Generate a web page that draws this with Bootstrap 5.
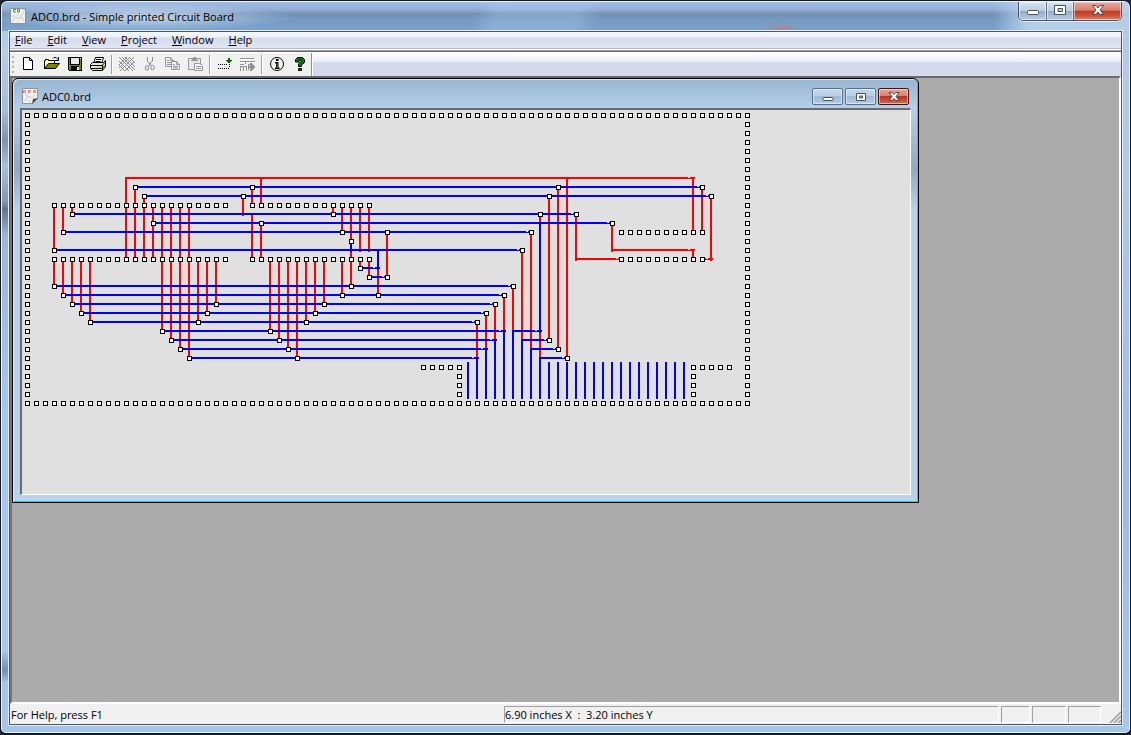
<!DOCTYPE html>
<html lang="en">
<head>
<meta charset="utf-8">
<meta name="viewport" content="width=device-width, initial-scale=1">
<title>ADC0.brd - Simple printed Circuit Board</title>
<link href="https://cdn.jsdelivr.net/npm/bootstrap@5.3.0/dist/css/bootstrap.min.css" rel="stylesheet">
<style>
  body { font-family: "Open Sans", "Noto Sans", sans-serif; font-size: 11px; line-height: 16px; color: #000; background: #1c2733; }
  h1, h2 { font-size: 11px; line-height: 16px; font-weight: 400; }
  .app-window {
    border: 1px solid #14181f; border-bottom-width: 2px; border-radius: 7px 7px 6px 6px;
    padding: 0 8px 8px;
    box-shadow: inset 0 0 0 1px #e8f2fc;
    background:
      linear-gradient(180deg, #b3cae6 0, #b3cae6 120px, #a9c6e8 260px, #9bbde2 480px, #a5c8ee 100%) right / 12px 100% no-repeat,
      linear-gradient(180deg, #a9c6ea 0, #b5cde6 50px, #a6bdd6 110px, #7d92aa 140px, #a9c2dc 165px, #8598ad 200px, #5e7490 208px, #9ab8d8 235px, #a6c8ec 420px, #a6c8ec 650px, #6f90b3 669px, #a5c5ea 682px, #a5c5ea 100%);
  }
  .glass-title {
    height: 29px; margin: 1px -7px 0; padding-left: 8px;
    background:
      radial-gradient(ellipse 150px 14px at 140px 15px, rgba(222,236,250,.75), rgba(222,236,250,0)),
      linear-gradient(90deg, rgba(190,215,240,0) 0 88%, rgba(190,213,238,.85) 91%),
      radial-gradient(ellipse 20px 6px at 780px 27px, rgba(190,120,120,.7), rgba(190,120,120,0)),
      linear-gradient(110deg, transparent 42%, rgba(190,215,250,.25) 44% 51%, transparent 53%),
      linear-gradient(180deg, #a0bce6 0, #93afd8 7px, #7392b4 12px, #769bc2 18px, #7ca3cd 100%);
    border-radius: 5px 5px 0 0;
  }
  .win-btns { height: 19px; border: 1px solid #46566b; border-top: 0; border-radius: 0 0 5px 5px; overflow: hidden; margin-right: 7px; box-shadow: 0 1px 0 #dcebfa; }
  .win-btn { border: 0; padding: 0; line-height: 1; background: linear-gradient(#d5e2f0 0, #bccde0 48%, #94abc4 50%, #b6cde4 100%); border-right: 1px solid #5b6d83; box-shadow: inset 0 0 0 1px rgba(255,255,255,.5); }
  .win-btn.w-close { background: linear-gradient(#e7a498 0, #d98070 46%, #bb3a22 50%, #cb5a40 80%, #e08c72 100%); border-right: 0; }
  .win-btns svg { display: block; margin: 0 auto 2px; }
  .win-min { width: 28px; } .win-max { width: 27px; } .w-close { width: 47px; }
  .child-btns { gap: 2px; margin-right: 2px; }
  .child-btns .win-btn { width: 31px; height: 17px; border: 1px solid #57708e; border-radius: 2px; background: linear-gradient(#c5d8ec 0, #b5cce4 48%, #9fbad6 50%, #b2cce8 100%); }
  .child-btns .w-close { border-color: #4d0f10; background: linear-gradient(#e7a498 0, #d98070 46%, #b83320 50%, #d46a50 100%); }
  .client { border: 1px solid #46566b; outline: 1px solid #e3eefa; background: #f0f0f0; }
  .menu-strip { height: 17px; background: linear-gradient(#f7f9fc 0, #eceff7 5px, #d5dbed 6px, #e1e6f5 16px, #b1bacb 16px, #b1bacb 17px); }
  .menu-strip a { color: #000; text-decoration: none; padding: 0 8px 0 7px; line-height: 16px; }
  .menu-strip li:first-child a { padding-left: 5px; }
  .rebar-edge { height: 4px; border-top: 1px solid #fff; background: linear-gradient(#a0a0a0 1px, #696969 1px 2px, #fff 2px); }
  .tool-strip { height: 23px; background: linear-gradient(#fff 0, #e8ebf7 9px, #d4daec 9px, #d4daec 100%); }
  .tool-band { background: #f0f0f0; border-right: 1px solid #909090; box-shadow: 1px 0 0 #fff; }
  .tool-grip { width: 7px; background: repeating-linear-gradient(#f0f0f0 0 3px, #b4b4b4 3px 5px) 2px 0/2px 100% no-repeat; }
  .tool-btn { width: 23px; height: 23px; padding: 0 0 2px; border: 0; background: none; }
  .tool-btn svg { display: block; margin: 1px auto 0; }
  .tool-sep { width: 6px; }
  .tool-sep::before { content: ""; display: block; width: 2px; height: 19px; margin: 2px; border-left: 1px solid #a0a0a0; border-right: 1px solid #fff; }
  .mdi { background: #ababab; border: solid; border-width: 2px 2px 2px 2px; border-color: #696969 #fff #fff #777; }
  .child-window { border: 1px solid #000; border-radius: 6px 6px 0 0; padding: 0 7px 7px; background: linear-gradient(#97b4d1 0, #b7d0e9 30px, #8fa9c4 90px, #b9d1ea 130px); box-shadow: inset 1px 1px 0 #dceaf8, inset -1px -1px 0 #35c6dc; }
  .child-title { height: 29px; padding: 6px 0 0 2px; }
  .board-frame { border: solid; border-width: 2px 1px 1px 2px; border-color: #6b6b6b #fff #fff #6b6b6b; background: #e0e0e0; }
  .status-strip { height: 20px; padding: 2px 0 1px 1px; }
  .pane { border: 1px solid; border-color: #a0a0a0 #fff #fff #a0a0a0; margin-right: 2px; line-height: 15px; }
  .pane-pos { width: 495px; } .pane-a { width: 29px; } .pane-b { width: 34px; } .pane-c { width: 33px; }
  .grip-corner { width: 18px; }
</style>
</head>
<body class="m-0">
<div class="app-window vh-100 d-flex flex-column overflow-hidden">
  <header class="glass-title d-flex align-items-start flex-shrink-0">
    <svg class="mt-1 me-1" width="17" height="20" viewBox="0 1 17 20" aria-hidden="true">
      <path fill="#f2f2ec" stroke="#8d9498" d="M.5 3.500h15v15H.5z"/>
      <path stroke="#c4c8c6" fill="none" d="M2 17l4-5 3 2 5-7M8 8v3M12 5h3M11 12l3 4M2 11h3"/>
      <path stroke="#3c9c50" fill="none" d="M6 4.500H3.500V7H6M7.500 4.500v2.500h2v-2.500z"/>
    </svg>
    <h1 class="m-0 flex-grow-1 align-self-center">ADC0.brd - Simple printed Circuit Board</h1>
    <div class="win-btns d-flex">
      <button class="win-btn win-min" type="button" aria-label="Minimize"><svg width="14" height="12"><rect x="1.500" y="6.500" width="11" height="4" rx="1" fill="#fff" stroke="#47525f"/></svg></button>
      <button class="win-btn win-max" type="button" aria-label="Maximize"><svg width="14" height="12"><path fill="#fff" stroke="#47525f" fill-rule="evenodd" d="M1.500 1.500h11v9h-11zM5 4.500h4.500v3H5z"/></svg></button>
      <button class="win-btn w-close" type="button" aria-label="Close"><svg width="14" height="12"><path fill="#fff" stroke="#55454d" d="M1.500 1.500h3.500l2 2.500 2-2.500h3.500L9 6l3.500 4.500H9L7 8l-2 2.500H1.500L5 6z"/></svg></button>
    </div>
  </header>

  <div class="client d-flex flex-column flex-grow-1">
    <nav aria-label="Main menu">
      <ul class="menu-strip list-unstyled d-flex m-0">
        <li><a href="#"><u>F</u>ile</a></li>
        <li><a href="#"><u>E</u>dit</a></li>
        <li><a href="#"><u>V</u>iew</a></li>
        <li><a href="#"><u>P</u>roject</a></li>
        <li><a href="#"><u>W</u>indow</a></li>
        <li><a href="#"><u>H</u>elp</a></li>
      </ul>
    </nav>
    <div class="rebar-edge"></div>
    <div class="tool-strip d-flex flex-shrink-0">
      <div class="tool-band d-flex" role="toolbar" aria-label="Standard">
        <div class="tool-grip"></div>
        <button class="tool-btn" type="button" aria-label="New"><svg width="16" height="16"><path fill="#fff" stroke="#000" d="M2.500 1.500h6l3 3v9h-9zM8.500 1.500v3h3"/></svg></button>
        <button class="tool-btn" type="button" aria-label="Open"><svg width="16" height="16"><path fill="#ffff9c" stroke="#000" d="M.5 12.500v-8h1v-1h3v1h6v3"/><path fill="#808000" stroke="#000" d="M.5 12.500l4-5h11l-4 5z"/><path stroke="#000" fill="none" d="M9 2.500l1-1h2l2 2M14.500 1v3.500H11"/></svg></button>
        <button class="tool-btn" type="button" aria-label="Save"><svg width="16" height="16" shape-rendering="crispEdges"><path d="M1 1h14v14H2l-1-1z"/><path fill="#808000" d="M2 2h1v7h10V3h1v11h-2v-4H4v4H2z"/><path fill="#e8e8e8" d="M4 2h8v6H4zM10 11h2v3h-2z"/><path fill="#fff" d="M13 2h1v1h-1z"/></svg></button>
        <button class="tool-btn" type="button" aria-label="Print"><svg width="18" height="16" viewBox="0 0 18 16"><path fill="#fff" stroke="#000" d="M4.500 7.500l2-6h8l-2 6"/><path stroke="#000" d="M7 3.500h5M6.500 5.500h5"/><path fill="#e4e4e4" stroke="#000" d="M1.500 8.500l2-2h11l2-2v6l-3 4h-10l-2-2z"/><path stroke="#000" fill="none" d="M2 9.500h11l3-3M2 12.500h11l3-3M13.500 9v5"/><path stroke="#cccc00" d="M9 11h3"/></svg></button>
        <div class="tool-sep"></div>
        <button class="tool-btn" type="button" aria-label="Route"><svg width="16" height="16" shape-rendering="crispEdges"><path stroke="#8c8c8c" fill="none" d="M0 1l14 14M3 1l13 13M6 1l10 10M0 5l10 10M0 9l6 6M15 1L1 15M11 1L0 12M8 1L0 9M15 6l-9 9M10 1l6 6"/></svg></button>
        <button class="tool-btn" type="button" aria-label="Cut"><svg width="16" height="16"><path stroke="#fff" fill="none" d="M6.500 2v4l4 5M11.500 2v3l-5 6"/><path stroke="#8c8c8c" fill="none" d="M5.500 1v4l4 5M10.500 1v4l-4 5"/><ellipse cx="5" cy="12" rx="1.700" ry="2.300" fill="none" stroke="#8c8c8c"/><ellipse cx="10.500" cy="11.500" rx="1.700" ry="2.300" fill="none" stroke="#8c8c8c"/></svg></button>
        <button class="tool-btn" type="button" aria-label="Copy"><svg width="17" height="16"><path fill="#f0f0f0" stroke="#969696" d="M1.500 1.500h5l3 3v6h-8zM6.500 1.500v3h3"/><path fill="#f4f4f4" stroke="#969696" d="M7.500 5.500h5l3 3v5h-8zM12.500 5.500v3h3"/><path stroke="#969696" d="M3 4.500h2M3 6.500h4M3 8.500h4M9 8.500h2M9 10.500h5M9 12h5"/><path stroke="#fff" fill="none" d="M8 14.500h8.500V9"/></svg></button>
        <button class="tool-btn" type="button" aria-label="Paste"><svg width="17" height="16"><path fill="#e8e8e8" stroke="#969696" d="M1.500 2.500h12v11h-12zM5.500 3.500v-1l1-1h2l1 1v1z"/><path stroke="#969696" d="M4 4.500h7"/><path fill="#f8f8f8" stroke="#969696" d="M7.500 7.500h5l3 2v5h-8z"/><path stroke="#969696" d="M9 10.500h5M9 12.500h5"/></svg></button>
        <div class="tool-sep"></div>
        <button class="tool-btn" type="button" aria-label="Place track"><svg width="16" height="16" shape-rendering="crispEdges"><path fill="#000" d="M1 8h1v1H1zM3 8h1v1H3zM5 8h1v1H5zM7 8h1v1H7zM9 8h1v1H9zM1 12h1v1H1zM3 12h1v1H3zM5 12h1v1H5zM7 12h1v1H7zM9 12h1v1H9zM11 12h1v1h-1zM12 10h1v1h-1zM12 8h1v1h-1z"/><path fill="#007000" d="M11 2h2v2h2v1h-1v1h-1v1h-2V6h-1V5H9V4h2z"/></svg></button>
        <button class="tool-btn" type="button" aria-label="Autoroute"><svg width="17" height="16" shape-rendering="crispEdges"><path stroke="#929292" fill="none" d="M1 2.500h14M1 5.500h6M1 8.500h4M6.500 8V5.500h9M9.500 8.500h4M1.500 11v4M4.500 11v4M7.500 11v4M1 10.500h7M9.500 14V8"/><path fill="#929292" d="M11 7h1l4 4-4 4h-1v-3H9v-2h2z"/><path stroke="#fff" d="M2 3.500h14M2 6.500h4M8 6.500h8M2 9.500h3"/></svg></button>
        <div class="tool-sep"></div>
        <button class="tool-btn" type="button" aria-label="About"><svg width="16" height="16"><circle cx="8" cy="8" r="6.500" fill="#f4f4f4" stroke="#000"/><path d="M7 3h2.500v2H7zM6 6h3.500v5.500h1V13H6v-1.500h1v-4H6z"/><path fill="#0a7a1a" d="M7.500 7H9v5H7.500z"/></svg></button>
        <button class="tool-btn" type="button" aria-label="Help"><svg width="16" height="16"><path fill="#007a10" stroke="#000" d="M3.500 6V3.500l2-2h5l2 2v3l-3 2.500v1.500h-3V8l2.500-2.500V4h-2v2zM6.500 12.500h3v2h-3z"/></svg></button>
      </div>
    </div>

    <main class="mdi flex-grow-1 d-flex align-items-start overflow-hidden">
      <section class="child-window flex-shrink-0" aria-labelledby="doc-title">
        <div class="child-title d-flex align-items-center">
          <svg class="me-1" width="16" height="17" viewBox="0 0 16 17" aria-hidden="true"><path fill="#f4f2ee" stroke="#8e9296" d="M.5.5h15v10l-5 5H.5z"/><path fill="#444" d="M10 16l1-5 5-1z"/><path stroke="#f07070" fill="none" d="M1.500 5V2.500h2v2h-2M6.500 5V2.500h2l-1 1 1 1.500M11.500 2.500v2h2v-2z"/><path stroke="#c4c4c0" fill="none" d="M3 13l3-5 4 2 3-3M3 7h3M6 12l3 2"/></svg>
          <h2 class="m-0 flex-grow-1" id="doc-title">ADC0.brd</h2>
          <div class="child-btns d-flex">
            <button class="win-btn" type="button" aria-label="Minimize board"><svg class="d-block mx-auto" width="14" height="12"><rect x="2" y="6.500" width="10" height="3" rx="1" fill="#fff" stroke="#47525f"/></svg></button>
            <button class="win-btn" type="button" aria-label="Maximize board"><svg class="d-block mx-auto" width="12" height="12"><path fill="#fff" stroke="#47525f" fill-rule="evenodd" d="M1.500 2.500h9v7h-9zM4.500 5h3v2h-3z"/></svg></button>
            <button class="win-btn w-close" type="button" aria-label="Close board"><svg class="d-block mx-auto" width="14" height="13"><path fill="#fff" stroke="#55454d" d="M2 2.500h3l2 2 2-2h3L9 6.500l3 4H9l-2-2-2 2H2l3-4z"/></svg></button>
          </div>
        </div>
        <div class="board-frame">
          <svg class="d-block" id="board" width="888" height="384" viewBox="0 0 888 384" shape-rendering="crispEdges" role="img" aria-label="Board layout">
            <path id="red" fill="#f00"/>
            <path id="blue" fill="#00f"/>
            <path id="gaps" fill="#e0e0e0"/>
            <path id="pad-edge" fill="#000"/>
            <path id="pad-core" fill="#fff"/>
          </svg>
        </div>
      </section>
    </main>

    <footer class="status-strip d-flex flex-shrink-0">
      <div class="flex-grow-1 align-self-end">For Help, press F1</div>
      <div class="pane pane-pos" style="white-space:pre">6.90 inches X  :  3.20 inches Y</div>
      <div class="pane pane-a"></div>
      <div class="pane pane-b"></div>
      <div class="pane pane-c"></div>
      <div class="grip-corner d-flex justify-content-end align-items-end"><svg width="12" height="12" aria-hidden="true"><path stroke="#9a9a9a" stroke-width="1.500" d="M1 12L12 1M5 12l7-7M9 12l3-3"/></svg></div>
    </footer>
  </div>
</div>

<script src="https://cdn.jsdelivr.net/npm/bootstrap@5.3.0/dist/js/bootstrap.bundle.min.js"></script>
<script>
  // Board grid: one cell is 9 px, cell (0,0) is centred 5 px inside the view.
  const at = n => 5 + 9 * n;
  const out = { red: '', blue: '', gaps: '', 'pad-edge': '', 'pad-core': '' };
  const box = (layer, x, y, w, h) => out[layer] += `M${x} ${y}h${w}v${h}h${-w}z`;

  // [row, from column, to column]
  const across = {
    red: [[7,11,74],[15,65,74],[16,61,66],[16,75,76]],
    blue: [[8,12,75],[9,13,76],[11,5,61],[12,14,65],[13,4,56],[15,3,55],[17,37,39],[18,38,40],
      [19,3,54],[20,4,53],[21,5,52],[22,6,51],[23,7,50],[24,15,53],[25,16,52],[26,17,51],[27,18,50],
      [24,54,57],[25,55,58],[26,56,59],[27,57,60]]
  };
  // [column, from row, to row]
  const down = {
    red: [[3,10,15],[4,10,13],[5,10,11],[11,7,16],[12,8,16],[13,9,16],[14,10,16],[15,10,24],[16,10,25],
      [17,10,26],[18,10,27],[3,16,19],[4,16,20],[5,16,21],[6,16,22],[7,16,23],[19,16,23],[20,16,22],[21,16,21],
      [24,9,11],[25,8,10],[25,11,16],[26,7,10],[26,12,16],[27,16,24],[28,16,25],[29,16,26],[30,16,27],
      [31,16,23],[32,16,22],[33,16,21],[34,10,11],[35,10,13],[36,10,14],[36,15,16],[37,10,15],[38,10,15],
      [35,16,20],[36,16,19],[37,16,17],[38,16,18],[39,17,20],[40,13,18],[50,23,27],[51,22,26],[52,21,25],
      [53,20,24],[54,19,24],[55,15,25],[56,13,26],[57,11,12],[57,24,27],[58,9,25],[59,8,26],[60,7,27],
      [61,11,16],[65,12,15],[74,7,13],[74,15,16],[75,8,13],[76,9,16]],
    blue: [[36,14,15],[39,15,17],[50,27,31],[51,26,31],[52,25,31],[53,24,31],[54,24,31],[55,25,31],
      [56,26,31],[57,12,24],[57,27,31]]
  };
  for (const layer of ['red', 'blue']) {
    for (const [r, a, b] of across[layer]) {
      box(layer, at(a) - 1, at(r) - 1, 9 * (b - a) + 3, 2);
      box('gaps', at(b) - 5, at(r) - 1, 2, 1);
    }
    for (const [c, a, b] of down[layer]) box(layer, at(c) - 1, at(a) - 1, 2, 9 * (b - a) + 3);
  }
  // edge connector fingers
  for (let c = 49; c <= 73; c++) box('blue', at(c) - 1, at(28) - 5, 2, 37);

  const pad = (c, r) => {
    box('pad-edge', at(c) - 2, at(r) - 2, 5, 5);
    box('pad-core', at(c) - 1, at(r) - 1, 3, 3);
  };
  const padRow = (r, a, b) => { for (let c = a; c <= b; c++) pad(c, r); };
  const padCol = (c, a, b) => { for (let r = a; r <= b; r++) pad(c, r); };
  padRow(0, 0, 80); padRow(32, 0, 80); padCol(0, 1, 31); padCol(80, 1, 31);
  [10, 16].forEach(r => { padRow(r, 3, 22); padRow(r, 25, 38); });
  [13, 16].forEach(r => padRow(r, 66, 75));
  padRow(28, 44, 48); padRow(28, 74, 78); padCol(48, 29, 31); padCol(74, 29, 31);
  // vias
  [[12,8],[25,8],[59,8],[75,8],[13,9],[24,9],[58,9],[76,9],[5,11],[34,11],[57,11],[61,11],[14,12],[26,12],
   [65,12],[4,13],[35,13],[40,13],[56,13],[36,14],[3,15],[55,15],[37,17],[38,18],[40,18],[3,19],[36,19],[54,19],
   [4,20],[35,20],[39,20],[53,20],[5,21],[21,21],[33,21],[52,21],[6,22],[20,22],[32,22],[51,22],[7,23],[19,23],
   [31,23],[50,23],[15,24],[27,24],[16,25],[28,25],[58,25],[17,26],[29,26],[59,26],[18,27],[30,27],[60,27]
  ].forEach(([c, r]) => pad(c, r));

  for (const id in out) document.getElementById(id).setAttribute('d', out[id]);
</script>
</body>
</html>
